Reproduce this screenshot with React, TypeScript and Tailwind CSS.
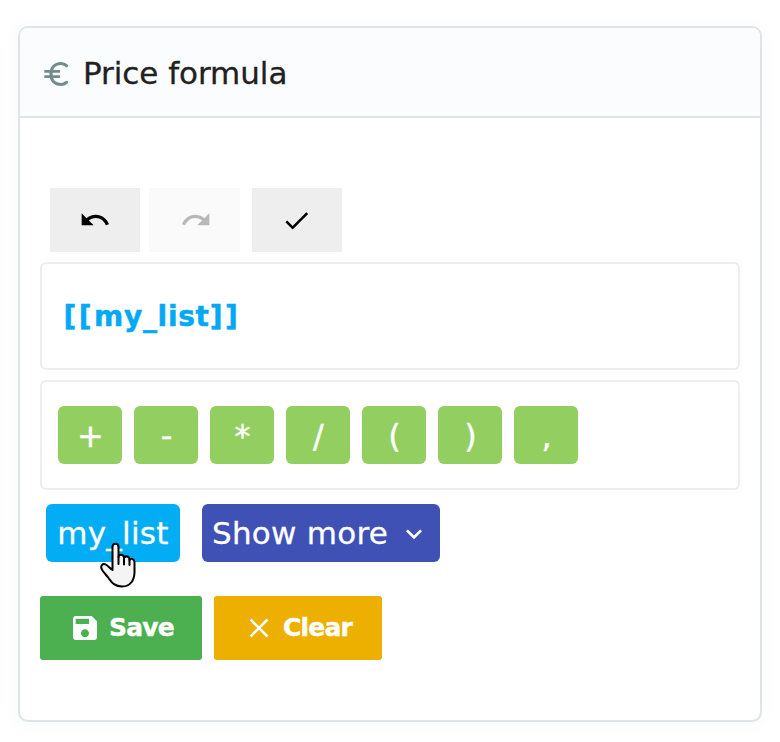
import type { ReactNode } from "react";

const OPERATORS = ["+", "-", "*", "/", "(", ")", ","];

function Icon({ d, className = "size-8" }: { d: string; className?: string }) {
  return (
    <svg viewBox="0 0 24 24" className={`shrink-0 ${className}`} fill="currentColor">
      <path d={d} />
    </svg>
  );
}

function EuroIcon() {
  return (
    <svg viewBox="0 0 24 24" className="size-6 shrink-0 overflow-visible text-[#728b8f]" fill="none" stroke="currentColor">
      <path d="M22.500 3.600C21 2.200 19 1.500 17 1.500C10.500 1.500 7 6 7 12S10.500 22.500 17 22.500C19 22.500 21 21.800 22.500 20.400" strokeWidth="3.200" strokeLinecap="round" />
      <path d="M.3 9.400H16M.3 14.600H16" strokeWidth="2.600" />
    </svg>
  );
}

function ToolButton({ children, className = "" }: { children: ReactNode; className?: string }) {
  return <button className={`flex h-16 items-center justify-center ${className}`}>{children}</button>;
}

function HandCursor() {
  return (
    <svg
      viewBox="0 0 36 46"
      className="pointer-events-none absolute left-[54px] top-[38px] h-[46px] w-9"
      fill="#f4f4f4"
      stroke="#000"
      strokeWidth="2"
      strokeLinecap="round"
      strokeLinejoin="round"
    >
      <path d="M12.500 27V5C12.500 .6 18.500 .6 18.500 5V15C19 11.600 24 12.200 24 16C25.500 13.200 29.500 14.200 29.500 18C31.500 15.700 34.500 17 34.500 20.500V30C34.500 38 30.500 44.500 22 44.500C14 44.500 11.500 40 8.500 36C6.500 33.400 5 32 2.500 28.500C-.5 24 2.500 20.500 6.500 23C8.500 24.200 10 26.500 12.500 28V25" />
      <path d="M18.500 15V22M24 16V22.500M29.500 18V23" fill="none" />
    </svg>
  );
}

export default function App() {
  return (
    <div className="h-[742px] w-[780px] bg-white px-[18px] pt-[26px] font-['DejaVu_Sans',Verdana,sans-serif]">
      <section className="h-[696px] w-[744px] overflow-hidden rounded-[10px] border-2 border-[#dfe5e6] bg-white shadow-[0_2px_18px_rgba(40,100,100,0.04)]">
        <header className="flex h-[90px] items-center border-b-2 border-[#dfe5e6] bg-[#fafcfe] pl-6">
          <div className="pt-1">
            <EuroIcon />
          </div>
          <h1 className="ml-[15px] pt-px text-[31px] leading-9 tracking-[-0.05px] text-[#212121] [-webkit-text-stroke:0.3px_#212121]">
            Price formula
          </h1>
        </header>

        <div className="px-5 pt-[70px]">
          <div className="flex pl-2.5">
            <ToolButton className="w-[90px] bg-[#eee] text-black">
              <Icon d="M12.500 8c-2.650 0-5.050.99-6.900 2.600L2 7v9h9l-3.620-3.620c1.390-1.160 3.160-1.880 5.120-1.880 3.540 0 6.550 2.310 7.600 5.500l2.370-.78C21.080 11.030 17.150 8 12.500 8z" />
            </ToolButton>
            <ToolButton className="ml-[9px] mr-3 w-[91px] bg-[#fafafa] pl-0.5 text-[#b8b8b8]">
              <Icon d="M18.400 10.600C16.550 8.990 14.150 8 11.500 8c-4.650 0-8.580 3.030-9.960 7.220L3.900 16c1.050-3.190 4.050-5.500 7.600-5.500 1.950 0 3.730.72 5.120 1.880L13 16h9V7l-3.600 3.600z" />
            </ToolButton>
            <ToolButton className="w-[90px] bg-[#eee] pr-0.5 text-black">
              <Icon className="size-[31px]" d="M9 16.170L4.830 12l-1.420 1.410L9 19 21 7l-1.410-1.410z" />
            </ToolButton>
          </div>

          <div className="mt-2.5 flex h-[108px] items-center rounded-md border-2 border-[#eee] pl-[21.5px] pt-0.5 text-[28px] font-bold leading-8 text-[#03a9f4] [-webkit-text-stroke:0.5px_#03a9f4]">
            <span className="tracking-[2.500px]">[[</span>
            <span className="tracking-[0.7px]">my_list</span>
            <span className="tracking-[2.500px]">]]</span>
          </div>

          <div className="mt-2.5 flex h-[110px] items-center gap-3 rounded-md border-2 border-[#eee] pl-4">
            {OPERATORS.map((op) => (
              <button
                key={op}
                className="flex h-[58px] w-16 items-center justify-center rounded-md bg-[#92cf60] pl-px pt-0.5 text-[32px] leading-9 text-white [-webkit-text-stroke:0.4px_white]"
              >
                {op}
              </button>
            ))}
          </div>

          <div className="mt-3.5 flex gap-[22px] pl-1.5 text-[31px] leading-9 tracking-[0.25px] text-white [-webkit-text-stroke:0.3px_white]">
            <div className="relative">
              <button className="flex h-[58px] w-[134px] items-center justify-center rounded-md bg-[#03adf3]">
                my_list
              </button>
              <HandCursor />
            </div>
            <button className="flex h-[58px] w-[238px] items-center whitespace-nowrap rounded-md bg-[#3f51b5] pl-2.5">
              Show more
              <Icon d="M7.410 8.590L12 13.170l4.590-4.580L18 10l-6 6-6-6 1.410-1.410z" className="ml-auto mr-2.5 mt-0.5 size-8" />
            </button>
          </div>

          <div className="mt-[34px] flex gap-3 text-[25px] font-bold leading-8 tracking-[-0.8px] text-white [-webkit-text-stroke:0.4px_white]">
            <button className="flex h-16 w-[162px] items-center rounded-[3px] bg-[#4caf50] pl-[29px]">
              <Icon d="M17 3H5c-1.110 0-2 .9-2 2v14c0 1.100.89 2 2 2h14c1.100 0 2-.9 2-2V7l-4-4zm-5 16c-1.660 0-3-1.340-3-3s1.340-3 3-3 3 1.340 3 3-1.340 3-3 3zm3-10H5V5h10v4z" />
              <span className="ml-2">Save</span>
            </button>
            <button className="flex h-16 w-[168px] items-center rounded-[3px] bg-[#edb000] pl-[35px]">
              <svg viewBox="0 0 20 20" className="size-5 shrink-0" fill="none" stroke="currentColor" strokeWidth="2.500">
                <path d="M1.500 1.500L18.500 18.500M18.500 1.500L1.500 18.500" />
              </svg>
              <span className="ml-3.5">Clear</span>
            </button>
          </div>
        </div>
      </section>
    </div>
  );
}
